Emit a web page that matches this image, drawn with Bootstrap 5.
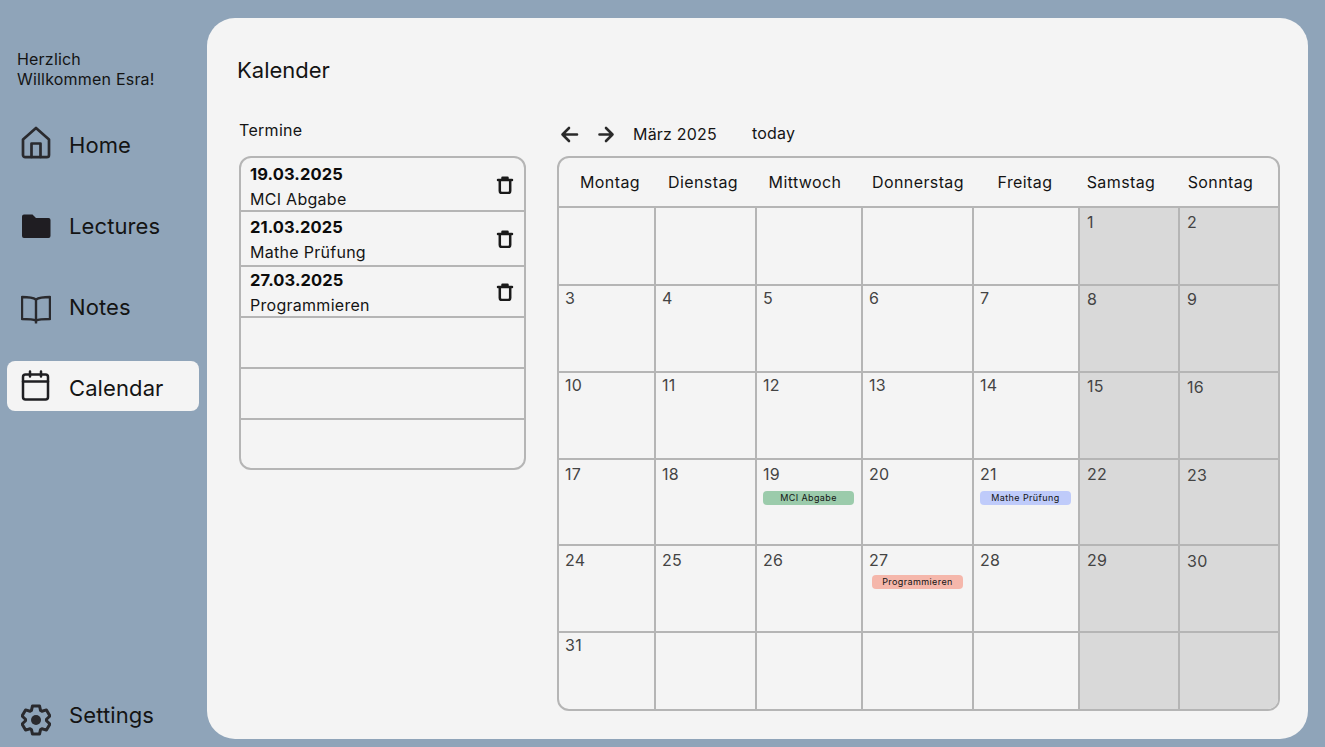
<!doctype html>
<html lang="de">
<head>
<meta charset="utf-8">
<title>Kalender</title>
<link href="https://cdn.jsdelivr.net/npm/bootstrap@5.3.0/dist/css/bootstrap.min.css" rel="stylesheet">
<style>
html,body{height:100%}
body{background:#8fa4b9;font-family:Inter,"Liberation Sans",sans-serif;color:#141414;overflow:hidden}
.side{width:207px;height:747px}
.hello{padding:49px 0 0 17px;font-size:16px;line-height:20px;height:120px;letter-spacing:.2px}
.side-item{display:flex;align-items:center;height:50px;margin:0 8px 31px 7px;padding-left:14px;border-radius:8px;font-size:22px;letter-spacing:.1px;color:#141414;text-decoration:none}
.side-item svg{width:30px;height:34px;margin-right:18px;flex:none}
.side-item .ic-home{margin-top:-7px}
.side-item .ic-folder{margin-top:-3px}
.side-item.on{background:#f4f4f4;margin-top:-2px;margin-bottom:33px;padding-top:4px}
.side-item.on svg{margin-top:-4px}
.side-end{margin-top:auto;margin-bottom:6px;padding-bottom:1px}
.side-end svg{margin-top:8px}
.panel{width:1101px;height:721px;margin-top:18px;background:#f4f4f4;border-radius:28px;padding:0 28px 0 32px}
.page-title{font-size:22px;line-height:30px;height:102px;padding-top:37px;margin:0 0 0 -2px;font-weight:400}
.appts{width:287px;margin-right:31px}
.appts-head{font-size:16px;line-height:20px;height:36px;letter-spacing:.3px}
.appts-box{border:2px solid #b5b5b5;border-radius:12px;height:314px;background:transparent}
.appts-box .slot{padding:0 10px 0 9px;border:0;border-top:2px solid #b5b5b5;border-radius:0;background:transparent;color:#141414;font-size:16px;line-height:25px;letter-spacing:.28px}
.appts-box .slot:first-child{border-top:0}
.s1{height:52px}.s2{height:55px}.s3{height:51px}.s4,.s5{height:51px}.s6{height:50px}
.slot>div{margin-top:2px}
.slot b{display:block;font-size:16.500px;font-weight:700;color:#0c0c0c;letter-spacing:.1px}
.slot .pad0{padding-top:3px}
.slot svg{width:18px;height:18px;flex:none;margin-top:1px}
.cal{width:723px}
.cal-bar{height:28px;margin-bottom:8px;font-size:16px;align-items:center;letter-spacing:.2px}
.cal-bar svg{width:19px;height:19px;flex:none}
.cal-bar .fw{margin:0 14px 0 3px}
.cal-bar .mo{margin:0 35px 0 4px}
.cal-bar .td{margin-top:-2px}
.cal-box{border:2px solid #b5b5b5;border-radius:12px;overflow:hidden;height:555px}
.cal-head{display:grid;grid-template-columns:102px 84px 120px 106px 108px 84px 115px;height:50px;border-bottom:2px solid #b5b5b5;font-size:16px;text-align:center;line-height:48px;letter-spacing:.4px}
.cal-grid{display:grid;grid-template-columns:97px 101px 106px 111px 106px 100px 98px;grid-template-rows:78px 87px 87px 86px 87px 76px}
.dc{border-right:2px solid #b5b5b5;border-bottom:2px solid #b5b5b5;padding:4px 0 0 6px;font-size:16px;line-height:20px;color:#444;letter-spacing:.3px}
.dc:nth-child(7n){border-right:0}
.dc:nth-last-child(-n+7){border-bottom:0}
.up{padding-top:2px}
.we{background:#d9d9d9;padding-left:7px}
.low{padding-top:5px}
.we.up{padding-top:3px}
.we.up.low{padding-top:4px}
.ev{display:block;width:91px;height:14px;border-radius:4px;font-size:9px;line-height:14px;text-align:center;color:#141414;letter-spacing:.4px}
.g{background:#9bcbab;margin-top:7px}
.b{background:#bfcbfa;margin-top:7px}
.r{background:#f5b7ab;margin-top:5px;margin-left:3px}
</style>
</head>
<body>
<div class="d-flex">
  <aside class="side d-flex flex-column">
    <div class="hello">Herzlich<br>Willkommen Esra!</div>
    <a class="side-item" href="#">
      <svg class="ic-home" viewBox="0 0 30 34" fill="none" stroke="#2a2a2e" stroke-width="2.700" stroke-linejoin="round" stroke-linecap="round"><path d="M2 14.500 15 3l13 11.500V30a2.200 2.200 0 0 1-2.200 2.200H4.200A2.200 2.200 0 0 1 2 30Z"/><path d="M10.500 32V18.500h9V32"/></svg>Home</a>
    <a class="side-item" href="#">
      <svg class="ic-folder" viewBox="0 0 30 34" fill="#1f1d22"><path d="M1 8.500a2 2 0 0 1 2-2h8.500l3.500 3.500h12.500a2 2 0 0 1 2 2V28a2 2 0 0 1-2 2H3a2 2 0 0 1-2-2Z"/></svg>Lectures</a>
    <a class="side-item" href="#">
      <svg viewBox="0 0 30 34" fill="none" stroke="#2a2a2e" stroke-width="2.400" stroke-linejoin="round"><path d="M15 9.500C12 7.500 6 7 1 7v22c5 0 11 0 14 1.500 3-1.500 9-1.500 14-1.500V7c-5 0-11 .5-14 2.500Z"/><path d="M15 9.500V33.500"/></svg>Notes</a>
    <a class="side-item on" href="#">
      <svg viewBox="0 0 30 34" fill="none" stroke="#1f1f22" stroke-width="2.500" stroke-linecap="round" stroke-linejoin="round"><rect x="2" y="5.500" width="25" height="25" rx="2.500"/><path d="M2 12.500h25M9 2.500v5M20 2.500v5"/></svg>Calendar</a>
    <a class="side-item side-end" href="#">
      <svg viewBox="0 0 30 34" fill="none" stroke="#2a2a2e" stroke-width="3" stroke-linejoin="round"><path d="M10.400 7.560 11.500 2.930h7l1.100 4.630 1.270.74 4.560-1.380 3.510 6.080-3.470 3.270v1.460l3.470 3.270-3.510 6.080-4.560-1.380-1.270.74-1.100 4.630h-7l-1.100-4.630-1.270-.74-4.560 1.380-3.510-6.080 3.470-3.270v-1.460L1.060 13l3.510-6.080 4.560 1.380Z"/><circle cx="15" cy="17" r="5" fill="#2a2a2e" stroke="none"/></svg>Settings</a>
  </aside>
  <main class="panel">
    <h1 class="page-title">Kalender</h1>
    <div class="d-flex">
      <section class="appts">
        <div class="appts-head">Termine</div>
        <div class="list-group appts-box">
          <div class="list-group-item slot s1 d-flex justify-content-between align-items-center"><div><b class="pad0">19.03.2025</b>MCI Abgabe</div><svg viewBox="0 0 18 18" fill="none" stroke="#1a1a1a" stroke-width="2.500" stroke-linejoin="round" stroke-linecap="round"><path d="M2 4h14M6.500 3.500V1.800h5v1.700M3.800 4.500v10.500a2 2 0 0 0 2 2h6.400a2 2 0 0 0 2-2V4.500"/></svg></div>
          <div class="list-group-item slot s2 d-flex justify-content-between align-items-center"><div><b>21.03.2025</b>Mathe Prüfung</div><svg viewBox="0 0 18 18" fill="none" stroke="#1a1a1a" stroke-width="2.500" stroke-linejoin="round" stroke-linecap="round"><path d="M2 4h14M6.500 3.500V1.800h5v1.700M3.800 4.500v10.500a2 2 0 0 0 2 2h6.400a2 2 0 0 0 2-2V4.500"/></svg></div>
          <div class="list-group-item slot s3 d-flex justify-content-between align-items-center"><div><b>27.03.2025</b>Programmieren</div><svg viewBox="0 0 18 18" fill="none" stroke="#1a1a1a" stroke-width="2.500" stroke-linejoin="round" stroke-linecap="round"><path d="M2 4h14M6.500 3.500V1.800h5v1.700M3.800 4.500v10.500a2 2 0 0 0 2 2h6.400a2 2 0 0 0 2-2V4.500"/></svg></div>
          <div class="list-group-item slot s4"></div>
          <div class="list-group-item slot s5"></div>
          <div class="list-group-item slot s6"></div>
        </div>
      </section>
      <section class="cal">
        <div class="cal-bar d-flex">
          <svg class="fw" viewBox="0 0 19 19" fill="none" stroke="#2a2a2a" stroke-width="2.600" stroke-linecap="round" stroke-linejoin="round"><path d="M17 9.500H2.500M9 3 2.500 9.500 9 16"/></svg>
          <svg class="fw" viewBox="0 0 19 19" fill="none" stroke="#2a2a2a" stroke-width="2.600" stroke-linecap="round" stroke-linejoin="round"><path d="M3.500 9.500h13M10 3l6.500 6.500L10 16"/></svg>
          <span class="mo">März 2025</span><span class="td">today</span>
        </div>
        <div class="cal-box">
          <div class="cal-head"><div>Montag</div><div>Dienstag</div><div>Mittwoch</div><div>Donnerstag</div><div>Freitag</div><div>Samstag</div><div>Sonntag</div></div>
          <div class="cal-grid">
            <div class="dc"></div><div class="dc"></div><div class="dc"></div><div class="dc"></div><div class="dc"></div><div class="dc we">1</div><div class="dc we">2</div>
            <div class="dc up">3</div><div class="dc up">4</div><div class="dc up">5</div><div class="dc up">6</div><div class="dc up">7</div><div class="dc we up">8</div><div class="dc we up">9</div>
            <div class="dc up">10</div><div class="dc up">11</div><div class="dc up">12</div><div class="dc up">13</div><div class="dc up">14</div><div class="dc we up">15</div><div class="dc we up low">16</div>
            <div class="dc">17</div><div class="dc">18</div><div class="dc">19<span class="ev g">MCI Abgabe</span></div><div class="dc">20</div><div class="dc">21<span class="ev b">Mathe Prüfung</span></div><div class="dc we">22</div><div class="dc we low">23</div>
            <div class="dc">24</div><div class="dc">25</div><div class="dc">26</div><div class="dc">27<span class="ev r">Programmieren</span></div><div class="dc">28</div><div class="dc we">29</div><div class="dc we low">30</div>
            <div class="dc up">31</div><div class="dc"></div><div class="dc"></div><div class="dc"></div><div class="dc"></div><div class="dc we"></div><div class="dc we"></div>
          </div>
        </div>
      </section>
    </div>
  </main>
</div>
<script src="https://cdn.jsdelivr.net/npm/bootstrap@5.3.0/dist/js/bootstrap.bundle.min.js"></script>
</body>
</html>
